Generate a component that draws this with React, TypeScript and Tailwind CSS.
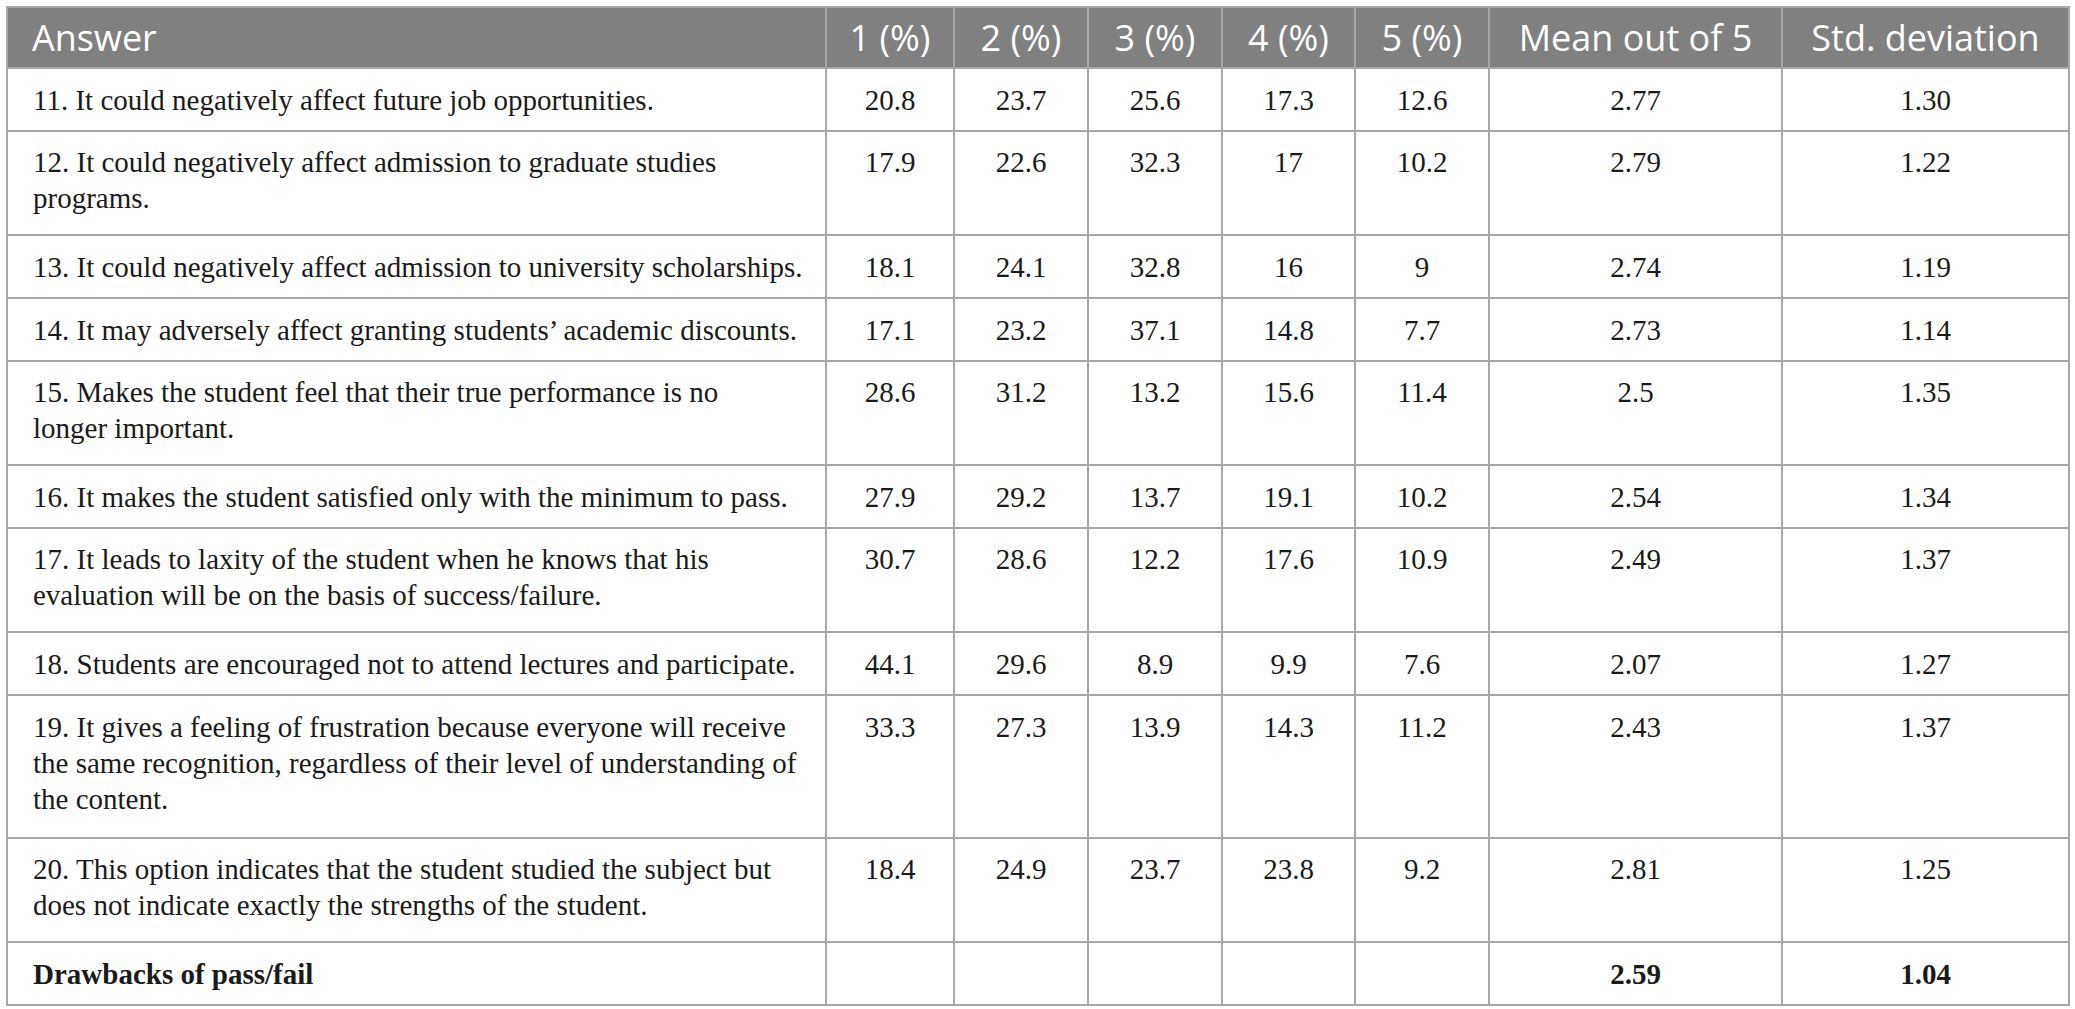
import React from "react";

type Row = {
  lines: string[];
  v: string[];
  bold?: boolean;
};

const rows: Row[] = [
  { lines: ["11. It could negatively affect future job opportunities."], v: ["20.8", "23.7", "25.6", "17.3", "12.6", "2.77", "1.30"] },
  { lines: ["12. It could negatively affect admission to graduate studies", "programs."], v: ["17.9", "22.6", "32.3", "17", "10.2", "2.79", "1.22"] },
  { lines: ["13. It could negatively affect admission to university scholarships."], v: ["18.1", "24.1", "32.8", "16", "9", "2.74", "1.19"] },
  { lines: ["14. It may adversely affect granting students\u2019 academic discounts."], v: ["17.1", "23.2", "37.1", "14.8", "7.7", "2.73", "1.14"] },
  { lines: ["15. Makes the student feel that their true performance is no", "longer important."], v: ["28.6", "31.2", "13.2", "15.6", "11.4", "2.5", "1.35"] },
  { lines: ["16. It makes the student satisfied only with the minimum to pass."], v: ["27.9", "29.2", "13.7", "19.1", "10.2", "2.54", "1.34"] },
  { lines: ["17. It leads to laxity of the student when he knows that his", "evaluation will be on the basis of success/failure."], v: ["30.7", "28.6", "12.2", "17.6", "10.9", "2.49", "1.37"] },
  { lines: ["18. Students are encouraged not to attend lectures and participate."], v: ["44.1", "29.6", "8.9", "9.9", "7.6", "2.07", "1.27"] },
  { lines: ["19. It gives a feeling of frustration because everyone will receive", "the same recognition, regardless of their level of understanding of", "the content."], v: ["33.3", "27.3", "13.9", "14.3", "11.2", "2.43", "1.37"] },
  { lines: ["20. This option indicates that the student studied the subject but", "does not indicate exactly the strengths of the student."], v: ["18.4", "24.9", "23.7", "23.8", "9.2", "2.81", "1.25"] },
  { lines: ["Drawbacks of pass/fail"], v: ["", "", "", "", "", "2.59", "1.04"], bold: true },
];

const headers = ["1 (%)", "2 (%)", "3 (%)", "4 (%)", "5 (%)", "Mean out of 5", "Std. deviation"];

const padByLines: Record<number, string> = {
  1: "pt-[13px] pb-[12px]",
  2: "pt-[12px] pb-[18px]",
  3: "pt-[13px] pb-[20px]",
};

export default function App() {
  return (
    <div className="bg-white w-[2075px] h-[1009px] pt-[6px] pl-[6px]">
      <table className="border-collapse border-2 border-[#a7a7a7] table-fixed w-[2062px]">
        <colgroup>
          <col className="w-[819px]" />
          <col className="w-[128px]" />
          <col className="w-[134px]" />
          <col className="w-[134px]" />
          <col className="w-[133px]" />
          <col className="w-[134px]" />
          <col className="w-[293px]" />
          <col className="w-[287px]" />
        </colgroup>
        <thead>
          <tr className="h-[61px] bg-[#808080] text-white text-[36px] [font-family:Open_Sans,sans-serif]">
            <th className="border-2 border-[#a7a7a7] text-left font-normal pl-[24px] leading-[40px]">Answer</th>
            {headers.map((h) => (
              <th key={h} className="border-2 border-[#a7a7a7] text-center font-normal leading-[40px] whitespace-nowrap">
                {h}
              </th>
            ))}
          </tr>
        </thead>
        <tbody className="text-[#1a1a1a] text-[29px] [font-family:Liberation_Serif,serif] leading-[36px]">
          {rows.map((r, i) => {
            const pad = padByLines[r.lines.length];
            return (
              <tr key={i} className={r.bold ? "font-bold" : ""}>
                <td className={`border-2 border-[#a7a7a7] align-top pl-[25px] pr-[6px] ${pad}`}>
                  {r.lines.map((l, j) => (
                    <div key={j} className="whitespace-nowrap">{l}</div>
                  ))}
                </td>
                {r.v.map((val, k) => (
                  <td key={k} className={`border-2 border-[#a7a7a7] align-top text-center ${pad}`}>
                    {val}
                  </td>
                ))}
              </tr>
            );
          })}
        </tbody>
      </table>
    </div>
  );
}
